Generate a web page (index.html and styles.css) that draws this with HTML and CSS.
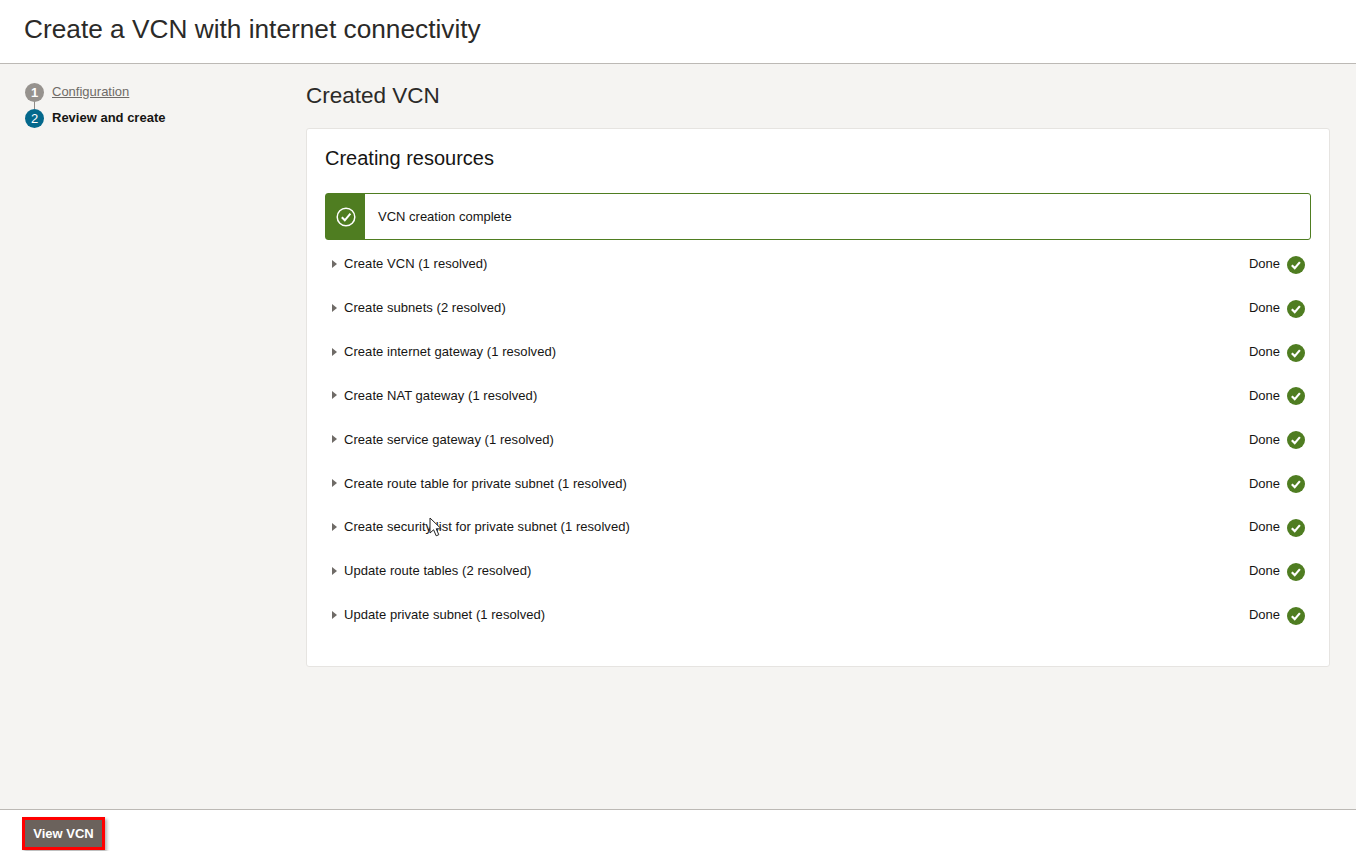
FILE: index.html
```html
<!DOCTYPE html>
<html lang="en">
  <head>
    <meta charset="UTF-8">
    <meta name="viewport" content="width=device-width, initial-scale=1.0">
    <title>Create a VCN with internet connectivity</title>
    <link rel="stylesheet" href="styles.css">
  </head>
<body>
  <header class="page-header">
    <h1>Create a VCN with internet connectivity</h1>
  </header>

  <div class="page-body">
    <ol class="steps">
      <li class="step step-done">
        <span class="step-num">1</span>
        <a href="#" class="step-link">Configuration</a>
      </li>
      <li class="step step-current">
        <span class="step-num">2</span>
        <span class="step-label">Review and create</span>
      </li>
    </ol>

    <main class="content">
      <h2>Created VCN</h2>
      <section class="card">
        <h3>Creating resources</h3>

        <div class="banner">
          <div class="banner-icon">
            <svg width="20" height="20" viewBox="0 0 20 20" fill="none" stroke="#fff">
              <circle cx="10" cy="10" r="8.8" stroke-width="1.5"/>
              <path d="M5.8 10.3l3 3 5.6-6.6" stroke-width="2"/>
            </svg>
          </div>
          <div class="banner-text">VCN creation complete</div>
        </div>

        <ul class="tasks">
          <li class="task">
            <span class="caret"></span>
            <span class="task-name">Create VCN (1 resolved)</span>
            <span class="task-state">Done</span>
            <svg class="ok" width="18" height="18" viewBox="0 0 18 18"><circle cx="9" cy="9" r="9" fill="#4f7d21"/><path d="M4.8 9.3l2.9 2.8 5.2-6" fill="none" stroke="#fff" stroke-width="2.2"/></svg>
          </li>
          <li class="task">
            <span class="caret"></span>
            <span class="task-name">Create subnets (2 resolved)</span>
            <span class="task-state">Done</span>
            <svg class="ok" width="18" height="18" viewBox="0 0 18 18"><circle cx="9" cy="9" r="9" fill="#4f7d21"/><path d="M4.8 9.3l2.9 2.8 5.2-6" fill="none" stroke="#fff" stroke-width="2.2"/></svg>
          </li>
          <li class="task">
            <span class="caret"></span>
            <span class="task-name">Create internet gateway (1 resolved)</span>
            <span class="task-state">Done</span>
            <svg class="ok" width="18" height="18" viewBox="0 0 18 18"><circle cx="9" cy="9" r="9" fill="#4f7d21"/><path d="M4.8 9.3l2.9 2.8 5.2-6" fill="none" stroke="#fff" stroke-width="2.2"/></svg>
          </li>
          <li class="task">
            <span class="caret"></span>
            <span class="task-name">Create NAT gateway (1 resolved)</span>
            <span class="task-state">Done</span>
            <svg class="ok" width="18" height="18" viewBox="0 0 18 18"><circle cx="9" cy="9" r="9" fill="#4f7d21"/><path d="M4.8 9.3l2.9 2.8 5.2-6" fill="none" stroke="#fff" stroke-width="2.2"/></svg>
          </li>
          <li class="task">
            <span class="caret"></span>
            <span class="task-name">Create service gateway (1 resolved)</span>
            <span class="task-state">Done</span>
            <svg class="ok" width="18" height="18" viewBox="0 0 18 18"><circle cx="9" cy="9" r="9" fill="#4f7d21"/><path d="M4.8 9.3l2.9 2.8 5.2-6" fill="none" stroke="#fff" stroke-width="2.2"/></svg>
          </li>
          <li class="task">
            <span class="caret"></span>
            <span class="task-name">Create route table for private subnet (1 resolved)</span>
            <span class="task-state">Done</span>
            <svg class="ok" width="18" height="18" viewBox="0 0 18 18"><circle cx="9" cy="9" r="9" fill="#4f7d21"/><path d="M4.8 9.3l2.9 2.8 5.2-6" fill="none" stroke="#fff" stroke-width="2.2"/></svg>
          </li>
          <li class="task">
            <span class="caret"></span>
            <span class="task-name">Create security list for private subnet (1 resolved)</span>
            <span class="task-state">Done</span>
            <svg class="ok" width="18" height="18" viewBox="0 0 18 18"><circle cx="9" cy="9" r="9" fill="#4f7d21"/><path d="M4.8 9.3l2.9 2.8 5.2-6" fill="none" stroke="#fff" stroke-width="2.2"/></svg>
            <svg class="cursor" width="14" height="20" viewBox="0 0 14 20"><path d="M1 1v15l3.6-3.2 2.6 6 2.6-1.1-2.6-5.9h5z" fill="#fff" stroke="#222" stroke-width="1"/></svg>
          </li>
          <li class="task">
            <span class="caret"></span>
            <span class="task-name">Update route tables (2 resolved)</span>
            <span class="task-state">Done</span>
            <svg class="ok" width="18" height="18" viewBox="0 0 18 18"><circle cx="9" cy="9" r="9" fill="#4f7d21"/><path d="M4.8 9.3l2.9 2.8 5.2-6" fill="none" stroke="#fff" stroke-width="2.2"/></svg>
          </li>
          <li class="task">
            <span class="caret"></span>
            <span class="task-name">Update private subnet (1 resolved)</span>
            <span class="task-state">Done</span>
            <svg class="ok" width="18" height="18" viewBox="0 0 18 18"><circle cx="9" cy="9" r="9" fill="#4f7d21"/><path d="M4.8 9.3l2.9 2.8 5.2-6" fill="none" stroke="#fff" stroke-width="2.2"/></svg>
          </li>
        </ul>
      </section>
    </main>
  </div>

  <footer class="page-footer">
    <button type="button" class="view-btn">View VCN</button>
  </footer>
</body>
</html>
```

FILE: styles.css
```css
/* page */
* {
  box-sizing: border-box;
}

html, body {
  height: 100%;
}

body {
  margin: 0;
  height: 851px;
  overflow: hidden;
  display: flex;
  flex-direction: column;
  background-color: #f5f4f2;
  color: #161513;
  font-family: "Liberation Sans", Arial, sans-serif;
  font-size: 13px;
}

/* header */
.page-header {
  height: 64px;
  padding: 0 24px 4px;
  display: flex;
  align-items: center;
  background-color: #fff;
  border-bottom: 1px solid #bcb9b5;
}

.page-header h1 {
  margin: 0;
  font-size: 26.25px;
  font-weight: 400;
  color: #2b2a28;
}

/* main area */
.page-body {
  flex: 1;
  display: flex;
  min-height: 0;
}

/* steps on the left */
.steps {
  width: 282px;
  margin: 0;
  padding: 15px 0 0 25px;
  list-style: none;
}

.step {
  display: flex;
  align-items: center;
  height: 26px;
  position: relative;
}

.step-done::after {
  content: "";
  position: absolute;
  left: 9px;
  top: 20px;
  width: 1px;
  height: 10px;
  background-color: #8f8b87;
}

.step-num {
  width: 19px;
  height: 19px;
  margin-right: 8px;
  border-radius: 50%;
  display: flex;
  align-items: center;
  justify-content: center;
  color: #fff;
  font-size: 13px;
  font-weight: 700;
  position: relative;
  z-index: 1;
}

.step-done .step-num {
  background-color: #96928e;
}

.step-current .step-num {
  background-color: #04688c;
  font-weight: 400;
}

.step-link {
  color: #6f6b67;
  margin-top: -2px;
}

.step-label {
  font-weight: 700;
  color: #161513;
  margin-top: -2px;
}

/* content */
.content {
  flex: 1;
  padding: 18px 26px 0 24px;
}

.content h2 {
  margin: 0 0 18px;
  font-size: 22.5px;
  line-height: 28px;
  font-weight: 400;
  color: #2b2a28;
}

.card {
  height: 539px;
  padding: 18px 18px 0;
  background-color: #fff;
  border: 1px solid #e6e4e1;
  border-radius: 3px;
}

.card h3 {
  margin: 0 0 23px;
  font-size: 20px;
  line-height: 23px;
  font-weight: 400;
}

/* success banner */
.banner {
  height: 47px;
  display: flex;
  align-items: center;
  border: 1px solid #4f7d21;
  border-radius: 3px;
}

.banner-icon {
  width: 39px;
  height: 100%;
  display: flex;
  align-items: center;
  justify-content: center;
  background-color: #4f7d21;
}

.banner-text {
  padding-left: 13px;
}

/* list of resources */
.tasks {
  margin: 2px 0 0;
  padding: 0;
  list-style: none;
}

.task {
  height: 43.85px;
  padding: 0 6px 0 7px;
  display: flex;
  align-items: center;
  position: relative;
}

.caret {
  width: 0;
  height: 0;
  margin-right: 7px;
  border-left: 5px solid #6f6b67;
  border-top: 4px solid transparent;
  border-bottom: 4px solid transparent;
}

.task-name {
  flex: 1;
  letter-spacing: 0.05px;
}

.task-state {
  margin-right: 7px;
}

.ok {
  margin-top: 2px;
}

.cursor {
  position: absolute;
  left: 104px;
  top: 12px;
}

/* bottom bar */
.page-footer {
  height: 42px;
  padding: 7px 0 0 22px;
  background-color: #fff;
  border-top: 1px solid #bcb9b5;
}

.view-btn {
  width: 83px;
  height: 33px;
  padding: 0;
  background-color: #6b625c;
  color: #fff;
  border: 3px solid #f00;
  box-shadow: 2px 2px 3px rgba(0, 0, 0, 0.3);
  font-family: inherit;
  font-size: 13px;
  font-weight: 700;
}
```
